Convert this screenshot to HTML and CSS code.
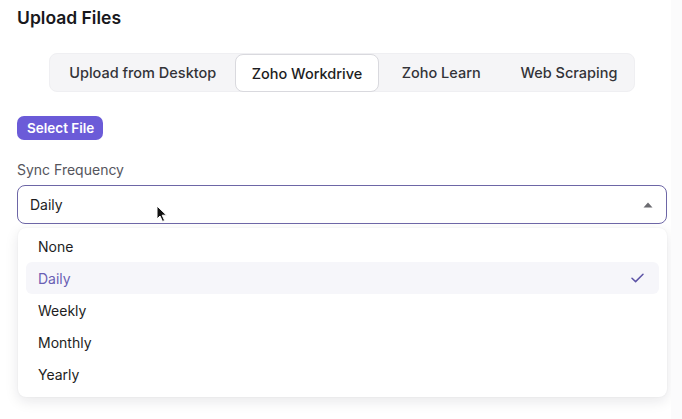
FILE: index.html
```html
<!DOCTYPE html>
<html lang="en">
<head>
  <meta charset="UTF-8">
  <meta name="viewport" content="width=device-width, initial-scale=1.0">
  <title>Upload Files</title>
  <link rel="stylesheet" href="styles.css">
</head>
<body>
  <div class="page">
    <h1 class="title">Upload Files</h1>

    <!-- Source tabs -->
    <div class="tabs-wrap">
      <div class="tabs">
        <div class="tab">Upload from Desktop</div>
        <div class="tab active">Zoho Workdrive</div>
        <div class="tab">Zoho Learn</div>
        <div class="tab">Web Scraping</div>
      </div>
    </div>

    <button class="select-file">Select File</button>

    <!-- Sync frequency -->
    <div class="field">
      <label class="field-label">Sync Frequency</label>
      <div class="select">
        <span class="select-value">Daily</span>
        <svg class="caret" width="10" height="6" viewBox="0 0 10 6"><path d="M5 0.5 L9.5 5.5 L0.5 5.5 Z" fill="#6b6b70"/></svg>
        <svg class="cursor" width="12" height="18" viewBox="0 0 12 18"><path d="M1 1 L1 14 L4 11 L6.5 16.5 L8.6 15.5 L6.2 10.2 L10.5 10.2 Z" fill="#111" stroke="#fff" stroke-width="1"/></svg>
      </div>
      <ul class="menu">
        <li class="option">None</li>
        <li class="option selected">Daily
          <svg class="check" width="13" height="10" viewBox="0 0 13 10"><path d="M1 5.2 L4.6 8.6 L12 1.2" fill="none" stroke="#5d54a6" stroke-width="1.5" stroke-linecap="round" stroke-linejoin="round"/></svg>
        </li>
        <li class="option">Weekly</li>
        <li class="option">Monthly</li>
        <li class="option">Yearly</li>
      </ul>
    </div>
  </div>
  <div class="gutter"></div>
</body>
</html>
```

FILE: styles.css
```css
/* General */
body {
  margin: 0;
  background: #fff;
  color: #1d1d22;
  font-family: Inter, 'Noto Sans', sans-serif;
  display: flex;
  min-height: 100vh;
}

.page {
  flex: 1;
  padding: 8px 4px 0 17px;
}

.gutter {
  width: 11px;
  background: #fbfbfc;
}

.title {
  font-size: 17.5px;
  font-weight: 600;
  line-height: 20px;
  margin: 0;
  color: #18181c;
}

/* Tabs */
.tabs-wrap {
  display: flex;
  justify-content: center;
  margin-top: 25px;
}

.tabs {
  display: flex;
  background: #f5f5f7;
  border: 1px solid #efeff2;
  border-radius: 8px;
  height: 37px;
  width: 584px;
}

.tab {
  display: flex;
  align-items: center;
  justify-content: center;
  font-size: 14.5px;
  font-weight: 500;
  color: #333338;
  border: 1px solid transparent;
  border-radius: 8px;
}

.tab:nth-child(1) { width: 186px; }
.tab:nth-child(2) { width: 143px; }
.tab:nth-child(3) { width: 125px; }
.tab:nth-child(4) { width: 130px; }

.tab.active {
  background: #fff;
  border-color: #d9d9de;
  margin: 0 0 -1px;
  color: #1d1d22;
}

/* Button */
.select-file {
  display: block;
  margin-top: 24px;
  height: 24px;
  padding: 0 9px 0 10px;
  background: #6b5bd8;
  color: #fff;
  border: none;
  border-radius: 7px;
  font-family: inherit;
  font-size: 13.5px;
  font-weight: 600;
}

/* Field */
.field {
  margin-top: 21px;
}

.field-label {
  display: block;
  font-size: 14px;
  color: #55555c;
  line-height: 17px;
}

.select {
  position: relative;
  margin-top: 7px;
  height: 37px;
  border: 1px solid #6d66a6;
  border-radius: 8px;
  display: flex;
  align-items: center;
  justify-content: space-between;
  padding: 0 13px 0 12px;
}

.select-value {
  font-size: 14px;
  color: #1d1d22;
}

.cursor {
  position: absolute;
  left: 138px;
  top: 19px;
}

/* Dropdown */
.menu {
  list-style: none;
  margin: 4px 0 0 1px;
  padding: 2px 8px 7px;
  background: #fff;
  border-radius: 8px;
  box-shadow: 0 4px 14px rgba(20, 20, 40, 0.10), 0 0 2px rgba(20, 20, 40, 0.06);
}

.option {
  height: 32px;
  display: flex;
  align-items: center;
  justify-content: space-between;
  padding: 0 15px 0 12px;
  font-size: 14px;
  color: #1d1d22;
  border-radius: 6px;
}

.option.selected {
  background: #f6f6fa;
  color: #6a5fb4;
}
```
